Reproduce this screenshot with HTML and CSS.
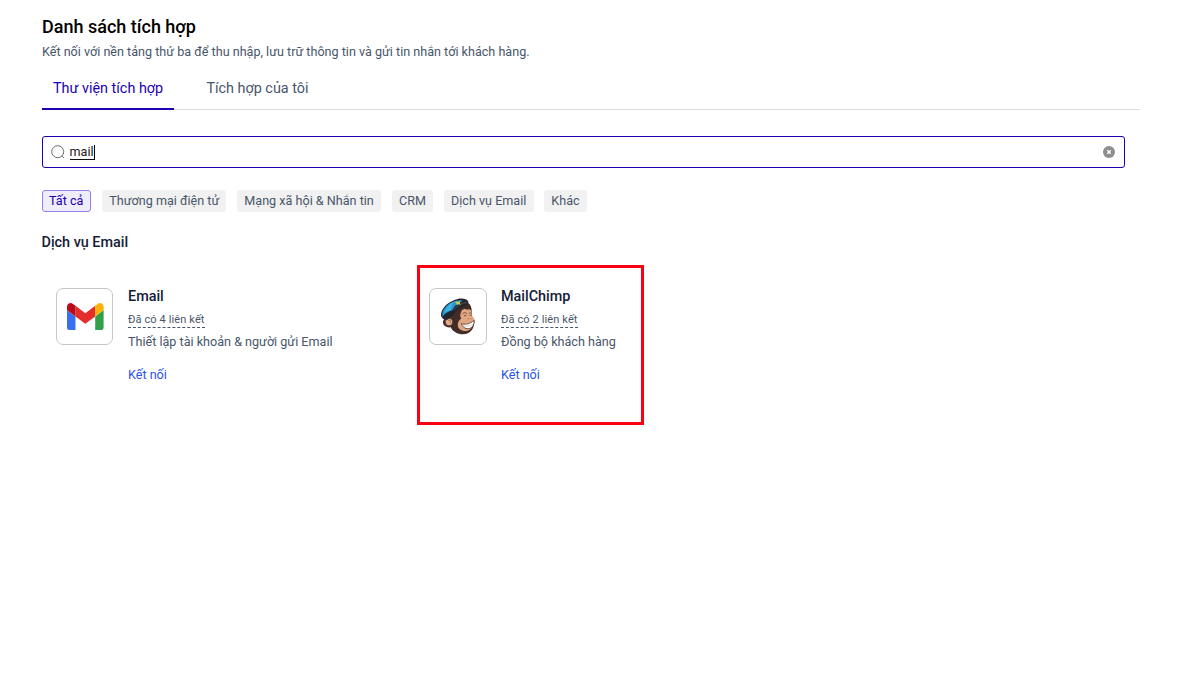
FILE: index.html
```html
<!DOCTYPE html>
<html lang="vi">
<head>
<meta charset="utf-8">
<title>Danh sách tích hợp</title>
<link rel="stylesheet" href="styles.css">
</head>
<body>
<main class="page">
  <h1 class="title">Danh sách tích hợp</h1>
  <p class="subtitle">Kết nối với nền tảng thứ ba để thu nhập, lưu trữ thông tin và gửi tin nhắn tới khách hàng.</p>
  <nav class="tabs">
    <a class="tab tab-active">Thư viện tích hợp</a>
    <a class="tab">Tích hợp của tôi</a>
  </nav>
  <div class="search">
    <svg class="search-icon" width="16" height="16" viewBox="0 0 16 16" fill="none" stroke="#6c6c74" stroke-width="1"><circle cx="7.700" cy="7.700" r="6"/><path d="M12 12l2 2"/></svg>
    <span class="query">mail</span><span class="caret"></span>
    <svg class="clear" width="12" height="12" viewBox="0 0 12 12"><circle cx="6" cy="6" r="6" fill="#8e8e8e"/><path d="M4.300 4.300l3.400 3.400M7.700 4.300L4.300 7.700" stroke="#fff" stroke-width="1.400"/></svg>
  </div>
  <div class="chips">
    <span class="chip chip-active">Tất cả</span>
    <span class="chip chip-commerce">Thương mại điện tử</span>
    <span class="chip chip-social">Mạng xã hội &amp; Nhắn tin</span>
    <span class="chip chip-crm">CRM</span>
    <span class="chip chip-email">Dịch vụ Email</span>
    <span class="chip chip-other">Khác</span>
  </div>
  <h2 class="section">Dịch vụ Email</h2>
  <div class="cards">
    <article class="card">
      <div class="logo">
        <svg class="gmail" width="37" height="28" viewBox="0 0 37 28"><path d="M0 7l8.500 6.400V27H2.500A2.500 2.500 0 0 1 0 24.500z" fill="#3970f0"/><path d="M28.200 13.400L36.600 7v17.500a2.500 2.500 0 0 1-2.500 2.500h-5.900z" fill="#30a04a"/><path d="M8.500 2.800l9.800 7.500 9.900-7.500v10.600l-9.900 7.400-9.800-7.400z" fill="#e42e2b"/><path d="M0 7.100V3.800C0 .5 3.600-.9 6 .9l2.500 1.900v10.600z" fill="#b90c19"/><path d="M28.200 2.800L30.600.9c2.400-1.800 6-.4 6 2.900v3.300l-8.400 6.300z" fill="#fbb20b"/></svg>
      </div>
      <div class="info">
        <h3 class="name">Email</h3>
        <span class="count">Đã có 4 liên kết</span>
        <p class="desc">Thiết lập tài khoản &amp; người gửi Email</p>
        <a class="connect">Kết nối</a>
      </div>
    </article>
    <article class="card">
      <div class="logo logo-wide">
        <svg class="mailchimp" width="46" height="48" viewBox="0 0 138 144">
          <path d="M53 57C66 43 82 34 96 33c8 4 11 13 11 25-1 7 0 12 2 17 7 6 8 14 5 21-1 18-14 30-33 31-17 0-31-8-37-21-12 2-23-5-23-15 0-9 9-15 17-13z" fill="#432b28"/>
          <path d="M74 64c2-12 12-16 19-11 7-4 13 0 13 8-1 5 0 10 4 14 6 4 7 12 3 17-2 16-14 27-29 25-16-2-22-15-17-27 2-6 7-8 9-11-4-3-4-9-2-15z" fill="#e0a782"/>
          <ellipse cx="39" cy="90" rx="11" ry="11" fill="#e3b18b" stroke="#432b28" stroke-width="2"/>
          <path d="M36 85c6-3 9 2 6 8" fill="none" stroke="#8b5b45" stroke-width="2.500"/>
          <path d="M15 72C14 48 38 27 65 21c12-3 29-1 32 8 1 6-1 12-6 12-16 2-30 13-38 28L37 81c-8 6-18 1-22-9z" fill="#25252d"/>
          <path d="M19 65c3-19 19-33 41-39 9-2 16-2 21 0-14 4-25 14-32 29-12 3-23 10-30 20z" fill="#2296d0"/>
          <path d="M26 60c4-14 13-23 27-31-4 9-8 18-8 25-8 2-14 5-19 9z" fill="#3fb2e6"/>
          <path d="M53 54C61 39 75 31 91 29l1 5c-17 2-30 10-38 23z" fill="#3c4654"/>
          <path d="M62 26l5 4 8-3-4 6 4 5-8-1-5 3-1-6-6-3 7-1z" fill="#d7c849"/>
          <path d="M79 66c5-5 10-5 14-1M98 65c4-4 7-3 9 0" fill="none" stroke="#764731" stroke-width="2.500"/>
          <path d="M84 71l7 0M101 70l5 0M96 80l2 1M104 79l2 1" stroke="#704630" stroke-width="2.500"/>
          <path d="M76 95c14 4 27 0 38-10 2 16-9 27-21 25-8-1-14-6-17-15z" fill="#fff" stroke="#59372b" stroke-width="2.500"/>
          <path d="M81 101c12 4 23 1 31-6" fill="none" stroke="#aaa6a0" stroke-width="1.500"/>
        </svg>
      </div>
      <div class="info">
        <h3 class="name">MailChimp</h3>
        <span class="count">Đã có 2 liên kết</span>
        <p class="desc">Đồng bộ khách hàng</p>
        <a class="connect">Kết nối</a>
      </div>
      <div class="highlight"></div>
    </article>
  </div>
</main>
</body>
</html>
```
FILE: styles.css
```css
* { box-sizing: border-box; }
body { margin: 0; background: #fff; font-family: Roboto, "Liberation Sans", sans-serif; color: #48566a; }
h1, h2, h3, p { margin: 0; }
.page { min-height: 677px; padding: 16px 40px 0 42px; }
.title { font-size: 18px; line-height: 22px; font-weight: 500; color: #000; }
.subtitle { margin-top: 4px; font-size: 12.6px; line-height: 20px; }
.tabs { display: flex; height: 48px; border-bottom: 1px solid #dedede; }
.tab { height: 48px; padding: 0 11px; margin-right: 21.4px; font-size: 14.4px; line-height: 53px; white-space: nowrap; }
.tab-active { width: 132px; color: #1b00b5; border-bottom: 2px solid #1b00b5; }
.search { display: flex; align-items: center; width: 1083px; height: 32px; margin-top: 26px; padding: 0 9px 0 7px; border: 1px solid #1b00b5; border-radius: 3px; }
.query { margin-left: 3.5px; font-size: 12.6px; line-height: 14px; color: #202020; border-bottom: 1px solid #111; }
.caret { width: 1px; height: 15px; margin-left: 0.5px; background: #000; }
.clear { margin-left: auto; }
.chips { display: flex; margin-top: 22px; }
.chip { height: 22px; padding-left: 7.3px; line-height: 22px; margin-right: 11px; font-size: 12.6px; white-space: nowrap; background: #f1f1f1; border-radius: 3px; }
.chip-active { width: 49px; padding-left: 6px; line-height: 20px; color: #1b00b5; background: #f0edfb; border: 1px solid #9580f3; }
.chip-commerce { width: 124px; }
.chip-social { width: 144px; }
.chip-crm { width: 41px; padding-left: 7px; }
.chip-email { width: 90px; padding-left: 7px; margin-right: 10px; }
.chip-other { width: 43px; }
.section { margin: 21px 0 0 -0.5px; font-size: 14.4px; line-height: 20px; font-weight: 500; color: #142038; }
.cards { display: flex; margin-top: 35px; padding-left: 14px; }
.card { position: relative; display: flex; width: 373px; gap: 15px; }
.logo { display: flex; align-items: center; justify-content: center; width: 57px; height: 57px; border: 1px solid #c3c7cc; border-radius: 7px; }
.logo-wide { width: 58px; margin-right: -1px; }
.gmail { margin-left: 1px; }
.mailchimp { margin: 0 0 1px 2px; }
.info { display: flex; flex-direction: column; align-items: flex-start; }
.name { font-size: 14.4px; line-height: 17px; font-weight: 500; color: #142038; }
.count { margin-top: 7px; font-size: 11px; letter-spacing: 0.12px; line-height: 15px; border-bottom: 1px dashed #48566a; }
.desc { margin-top: 4px; font-size: 12.6px; line-height: 20px; }
.connect { margin-top: 13px; font-size: 12.6px; line-height: 20px; color: #2953e8; }
.highlight { position: absolute; left: -12px; top: -23px; width: 227px; height: 160px; border: 3px solid #fb0010; }
```
